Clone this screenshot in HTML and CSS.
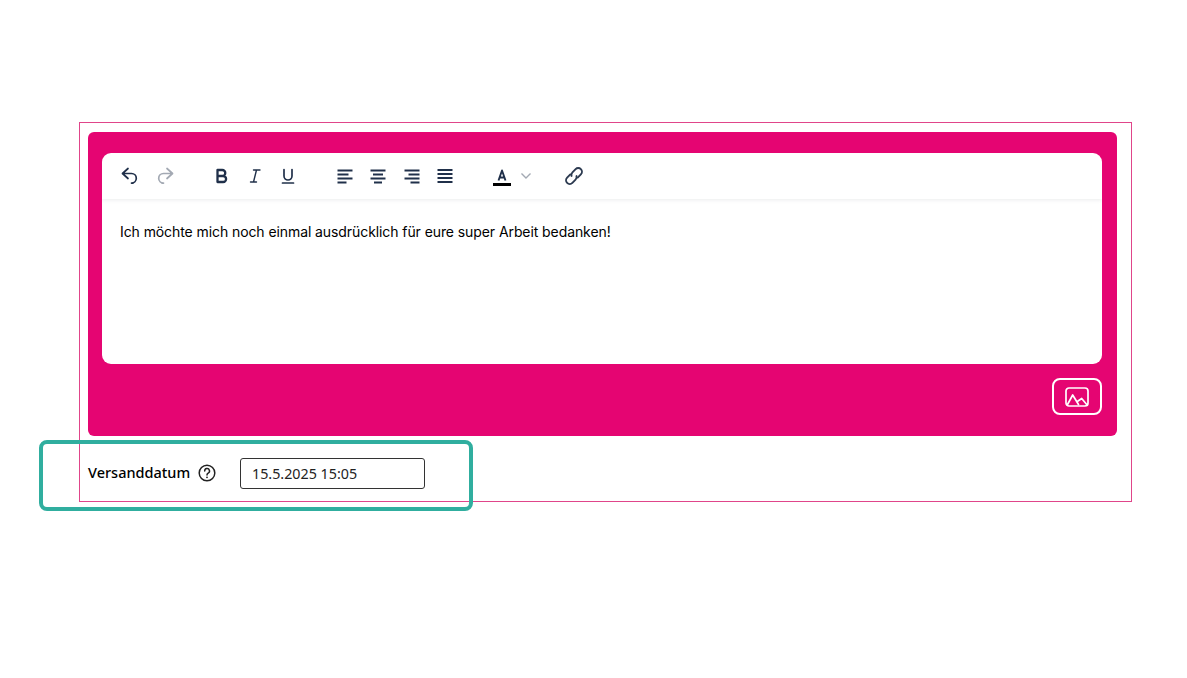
FILE: index.html
```html
<!DOCTYPE html>
<html lang="de">
<head>
<meta charset="utf-8">
<title>Editor</title>
<link rel="stylesheet" href="styles.css">
</head>
<body>
<main class="frame">
  <section class="panel">
    <div class="editor">
      <div class="toolbar">
        <div class="group group-history">
          <svg class="ic" viewBox="0 0 20 20"><path d="M8 2.500 2.500 7.500l5.500 5M2.500 7.500h9a4.800 4.800 0 0 1 0 9.600H13"/></svg>
          <svg class="ic ic-off" viewBox="0 0 20 20"><path d="M12 2.500l5.500 5-5.500 5M17.500 7.500h-9a4.800 4.800 0 0 0 0 9.600H7"/></svg>
        </div>
        <div class="group group-format">
          <svg class="ic ic-bold" viewBox="0 0 20 20"><path d="M5.500 4h4.800a3 3 0 0 1 0 6H5.500zM5.500 10h5.600a3 3 0 0 1 0 6H5.500z"/></svg>
          <svg class="ic ic-thin" viewBox="0 0 20 20"><path d="M8.500 4H15M5.500 16H11.500M11.500 4 8.500 16"/></svg>
          <svg class="ic" viewBox="0 0 20 20"><path d="M6 3.500v6.500a4 4 0 0 0 8 0V3.500M4.500 17h11"/></svg>
        </div>
        <div class="group group-align">
          <svg class="ic ic-line" viewBox="0 0 20 20"><path d="M2.500 4.500h15M2.500 8.500h11M2.500 12.500h15M2.500 16.500h9"/></svg>
          <svg class="ic ic-line" viewBox="0 0 20 20"><path d="M2.500 4.500h15M5 8.500h10M2.500 12.500h15M6 16.500h8"/></svg>
          <svg class="ic ic-line" viewBox="0 0 20 20"><path d="M2.500 4.500h15M6.500 8.500h11M2.500 12.500h15M8.500 16.500h9"/></svg>
          <svg class="ic ic-line" viewBox="0 0 20 20"><path d="M2.500 4h15M2.500 8h15M2.500 12h15M2.500 16h15"/></svg>
        </div>
        <div class="group group-color">
          <span class="color-btn">
            <svg class="ic" viewBox="0 0 16 16"><path d="M4.500 13.500 8 3.500l3.500 10M5.500 10.500h5"/></svg>
            <span class="color-bar"></span>
          </span>
          <svg class="ic-chevron" viewBox="0 0 12 8"><path d="M1.500 1.500 6 6l4.500-4.500"/></svg>
        </div>
        <svg class="ic ic-link" viewBox="0 0 20 20"><g transform="rotate(-45 10 10)"><path d="M8.500 6.300H4a3.700 3.700 0 0 0 0 7.400h4.500a3.700 3.700 0 0 0 3.200-1.900"/><path d="M11.500 13.700H16a3.700 3.700 0 0 0 0-7.400h-4.500a3.700 3.700 0 0 0-3.200 1.900"/></g></svg>
      </div>
      <div class="content">Ich möchte mich noch einmal ausdrücklich für eure super Arbeit bedanken!</div>
    </div>
    <div class="panel-foot">
      <button class="image-btn" type="button" aria-label="Bild">
        <svg class="ic-image" viewBox="0 0 24 20"><rect x="1" y="1" width="22" height="18" rx="3"/><path d="M2.500 17.500 7.700 8l5.800 9.500M13 14l3.700-2.500 5 6"/></svg>
      </button>
    </div>
  </section>
  <div class="date-row">
    <span class="date-label">Versanddatum</span>
    <svg class="ic-help" viewBox="0 0 18 18"><circle cx="9" cy="9" r="7.800"/><path d="M6.700 7a2.400 2.400 0 1 1 3.500 2.100c-.8.500-1.200.9-1.200 1.800"/><circle class="dot" cx="9" cy="13.300" r=".9"/></svg>
    <input class="date-input" type="text" value="15.5.2025 15:05">
  </div>
  <div class="highlight"></div>
</main>
</body>
</html>
```
FILE: styles.css
```css
* { box-sizing: border-box; }
html, body { margin: 0; height: 100%; background: #fff; overflow: hidden; }
body { padding: 122px 55px 0 79px; }

.frame {
  position: relative;
  width: 1053px;
  height: 380px;
  border: 1px solid #e0458a;
  padding: 9px 14px 0 8px;
}

.panel {
  height: 304px;
  background: #e50572;
  border-radius: 6px;
  padding: 21px 15px 0 14px;
}

.editor {
  height: 211px;
  background: #fff;
  border-radius: 9px;
  overflow: hidden;
}

.toolbar {
  display: flex;
  align-items: center;
  height: 46px;
  padding: 0 0 0 18px;
  box-shadow: 0 1px 4px rgba(30, 40, 60, .09);
}

.group { display: flex; align-items: center; }
.group-history { gap: 15px; }
.group-format { gap: 13px; margin-left: 36.500px; }
.group-align { gap: 13.500px; margin-left: 37px; }
.group-color { margin-left: 37.500px; }

.ic {
  flex: none;
  width: 20px;
  height: 20px;
  fill: none;
  stroke: #20304a;
  stroke-width: 1.700;
  stroke-linecap: round;
  stroke-linejoin: round;
}
.ic-off { stroke: #a3a9b3; }
.ic-bold { stroke-width: 2.300; }
.ic-thin { stroke-width: 1.400; }
.ic-line { stroke-width: 1.800; stroke-linecap: butt; }
.ic-link { margin-left: 32px; stroke-width: 1.900; stroke: #2c3a50; }

.color-btn { display: flex; flex-direction: column; align-items: center; width: 18px; margin-top: 1px; }
.color-btn .ic { width: 16px; height: 16px; stroke-width: 1.900; stroke-linecap: butt; }
.color-bar { width: 18px; height: 2.500px; background: #000; }
.ic-chevron {
  width: 12px;
  height: 8px;
  margin-left: 9.500px;
  fill: none;
  stroke: #a3a9b3;
  stroke-width: 1.400;
}

.content {
  padding: 24px 18px;
  font: 14px/17px Inter, "Liberation Sans", sans-serif;
  letter-spacing: -.085px;
  color: #000;
}

.panel-foot { display: flex; justify-content: flex-end; padding-top: 14px; }

.image-btn {
  display: flex;
  align-items: center;
  justify-content: center;
  width: 50px;
  height: 37px;
  padding: 0;
  background: transparent;
  border: 2px solid #fff;
  border-radius: 8px;
}
.ic-image { width: 24px; height: 20px; fill: none; stroke: #fff; stroke-width: 1.700; stroke-linejoin: round; stroke-linecap: round; }

.date-row { display: flex; align-items: center; height: 66px; padding-top: 9px; }
.date-label {
  font: 500 14.500px/20px "Noto Sans", "Open Sans", sans-serif;
  color: #000;
  width: 102px;
  white-space: nowrap;
  position: relative;
  top: -2px;
}
.ic-help { width: 18px; height: 18px; margin: 0 0 2px 8px; fill: none; stroke: #222; stroke-width: 1.500; stroke-linecap: round; }
.ic-help .dot { fill: #222; stroke: none; }
.date-input {
  width: 185px;
  height: 31px;
  margin-left: 24px;
  padding: 0 11px;
  border: 1px solid #333;
  border-radius: 3px;
  font: 14.300px "Noto Sans", "Open Sans", sans-serif;
  color: #222;
  background: #fff;
  outline: none;
}

.highlight {
  position: absolute;
  left: -41px;
  top: 317px;
  width: 434px;
  height: 71px;
  border: 4px solid #30ae9f;
  border-radius: 8px;
  pointer-events: none;
}
```
